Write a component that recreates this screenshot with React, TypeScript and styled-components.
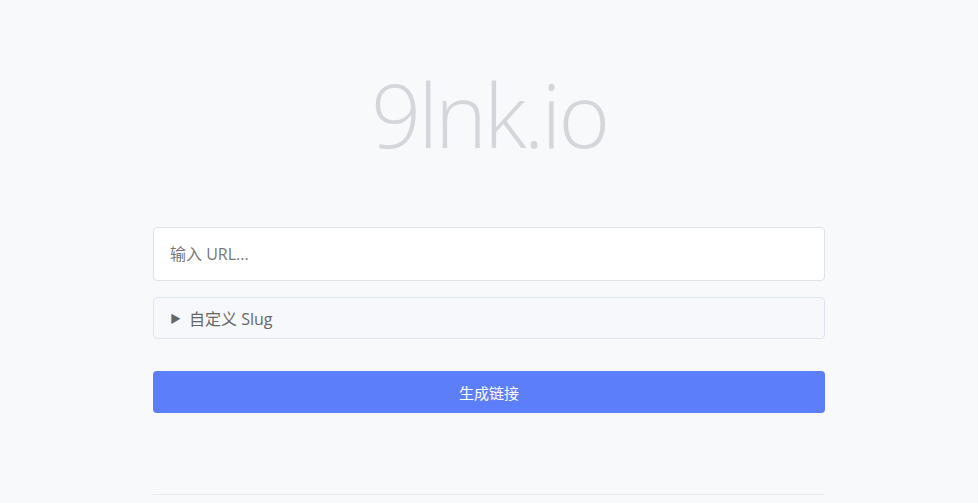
import React from "react";
import styled, { createGlobalStyle } from "styled-components";

const Global = createGlobalStyle`
  html, body { margin: 0; padding: 0; background: #f8f9fb; }
  body { font-family: "Open Sans", "Noto Sans CJK SC", sans-serif; }
  * { box-sizing: border-box; }
`;

const Page = styled.main`
  width: 672px;
  margin: 0 auto;
  padding-top: 64px;
  display: flex;
  flex-direction: column;
`;

const Title = styled.h1`
  margin: 0 0 63px;
  text-align: center;
  font-family: "Open Sans", sans-serif;
  font-weight: 300;
  font-size: 88px;
  line-height: 100px;
  color: #d3d6db;
  letter-spacing: -3px;
`;

const UrlInput = styled.input`
  height: 54px;
  width: 100%;
  border: 1px solid #dfe2e6;
  border-radius: 4px;
  background: #fff;
  padding: 0 16px;
  font-size: 16px;
  font-family: "Open Sans", "Noto Sans CJK SC", sans-serif;
  color: #333;
  &::placeholder { color: #777; }
  outline: none;
`;

const Details = styled.details`
  margin-top: 16px;
  border: 1px solid #dde5ef;
  border-radius: 4px;
  background: #f6f8fb;
`;

const Summary = styled.summary`
  height: 40px;
  display: flex;
  align-items: center;
  gap: 8px;
  padding: 0 16px 1px;
  font-size: 16px;
  font-family: "Open Sans", "Noto Sans CJK SC", sans-serif;
  color: #666;
  cursor: pointer;
  list-style: none;
  &::-webkit-details-marker { display: none; }
`;

const Arrow = styled.span`
  font-size: 11px;
  color: #666;
`;

const Button = styled.button`
  margin-top: 32px;
  height: 42px;
  width: 100%;
  border: none;
  border-radius: 4px;
  background: #5c7ef8;
  color: #fff;
  font-size: 15px;
  font-family: "Open Sans", "Noto Sans CJK SC", sans-serif;
  cursor: pointer;
`;

const Divider = styled.hr`
  margin: 81px 0 0;
  border: none;
  border-top: 1px solid #ebecf0;
`;

export default function App() {
  return (
    <>
      <Global />
      <Page>
        <Title>9lnk.io</Title>
        <UrlInput placeholder="输入 URL..." />
        <Details>
          <Summary>
            <Arrow>▶</Arrow>自定义 Slug
          </Summary>
        </Details>
        <Button>生成链接</Button>
        <Divider />
      </Page>
    </>
  );
}
